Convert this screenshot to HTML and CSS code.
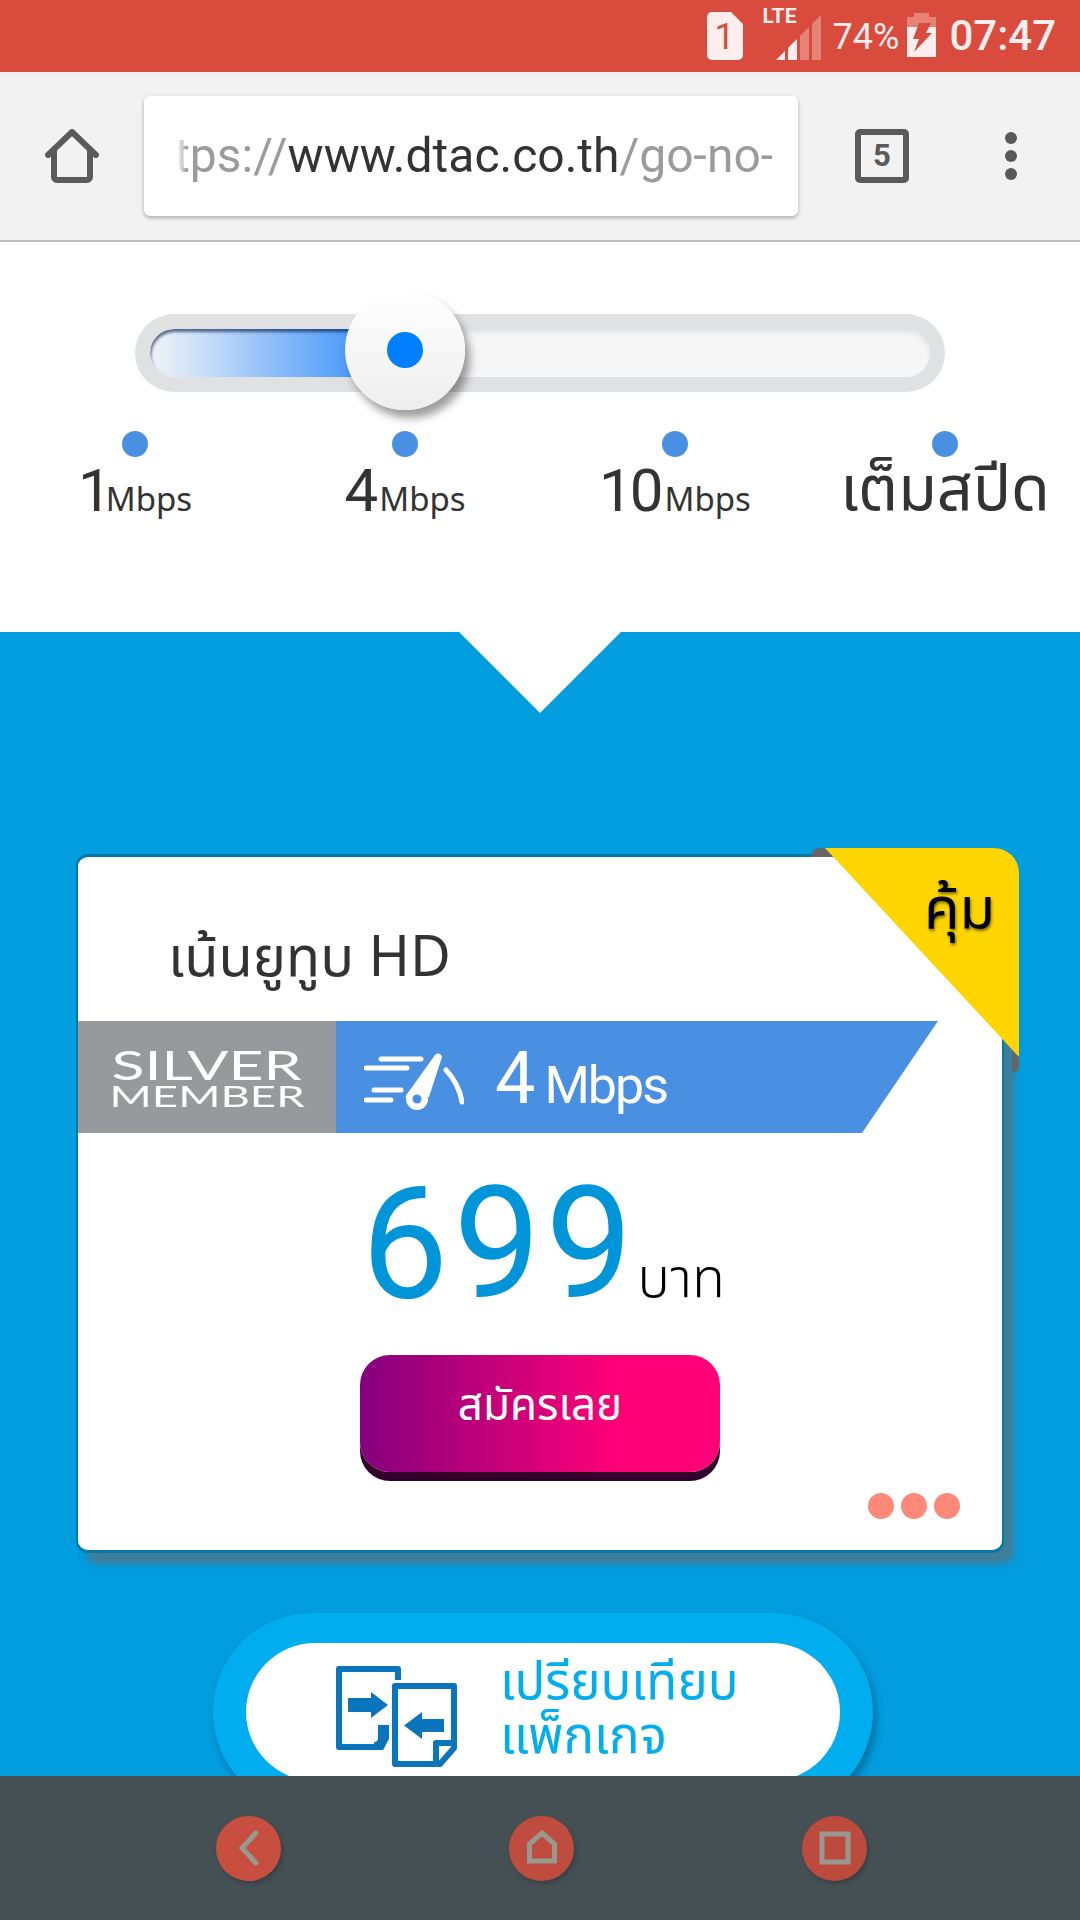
FILE: index.html
```html
<!DOCTYPE html>
<html lang="th">
<head>
<meta charset="utf-8">
<title>dtac go-no-limit</title>
<link rel="stylesheet" href="styles.css">
</head>
<body>
<div class="phone">
  <header class="status">
    <div class="sim"><svg viewBox="0 0 36 48" width="36" height="48"><path class="sb-fill" d="M5 0H24L36 12V43a5 5 0 0 1-5 5H5a5 5 0 0 1-5-5V5a5 5 0 0 1 5-5Z"/></svg><span class="sim-num">1</span></div>
    <div class="signal"><span class="lte">LTE</span><svg viewBox="0 0 45 45" width="45" height="45"><polygon class="sb-fill" points="0,45 9,36 9,45"/><polygon class="sb-fill" points="12,33 21,24 21,45 12,45"/><polygon class="sb-dim" points="24,21 33,12 33,45 24,45"/><polygon class="sb-dim" points="36,9 45,0 45,45 36,45"/></svg></div>
    <span class="pct">74%</span>
    <svg class="batt" viewBox="0 0 29 44" width="29" height="44"><path class="sb-dim" d="M7 0H22V4H29V14H0V4H7Z"/><rect class="sb-fill" y="14" width="29" height="30"/><polygon class="sb-cut" points="12,10 24,10 19,20 25,20 7,39 12,26 6,26"/></svg>
    <span class="time">07:47</span>
  </header>

  <nav class="toolbar">
    <svg class="tb-home" viewBox="0 0 54 54" width="54" height="54"><path d="M3 26 27 3 51 26M9 21V48a3 3 0 0 0 3 3H42a3 3 0 0 0 3-3V21"/></svg>
    <div class="omnibox"><div class="url"><span class="url-inner">https://<b>www.dtac.co.th</b>/go-no-limit</span></div></div>
    <div class="tabs">5</div>
    <div class="menu"><i></i><i></i><i></i></div>
  </nav>

  <main class="page">
    <section class="speed">
      <div class="track">
        <div class="track-inner"><div class="track-fill"></div></div>
        <div class="knob"><i></i></div>
      </div>
      <div class="stops">
        <div class="stop"><i class="stop-dot"></i><span class="stop-label"><span class="num">1</span><span class="unit tight">Mbps</span></span></div>
        <div class="stop"><i class="stop-dot"></i><span class="stop-label"><span class="num">4</span><span class="unit">Mbps</span></span></div>
        <div class="stop"><i class="stop-dot"></i><span class="stop-label"><span class="num">10</span><span class="unit">Mbps</span></span></div>
        <div class="stop"><i class="stop-dot"></i><span class="stop-label full">เต็มสปีด</span></div>
      </div>
    </section>

    <section class="plans">
      <div class="notch"></div>
      <article class="card">
        <h2 class="title">เน้นยูทูบ HD</h2>
        <div class="strip">
          <div class="member"><span class="m1">SILVER</span><span class="m2">MEMBER</span></div>
          <div class="rate">
            <svg class="gauge" viewBox="0 0 100 58" width="100" height="58"><g class="g-lines"><path d="M17 7H57M2 16H43M10 38H37M2 48H27"/><path d="M82 18Q95 32 98 50"/></g><path class="g-needle" d="M71 3a4 4 0 0 1 7 2L65 45H41Z"/><circle class="g-needle" cx="53" cy="47" r="11"/><circle class="g-hole" cx="53" cy="47" r="4.500"/></svg>
            <span class="rate-num">4</span><span class="rate-unit">Mbps</span>
          </div>
        </div>
        <div class="price"><span class="amount">699</span><span class="baht">บาท</span></div>
        <a class="cta">สมัครเลย</a>
        <div class="more"><i></i><i></i><i></i></div>
        <div class="ribbon">
          <svg viewBox="0 0 208 225" width="208" height="225"><path class="r-fold" d="M0 9Q1 0 10 0H14L22 9Z"/><path class="r-fold" d="M201 195 208 209V218a7 7 0 0 1-7 7Z"/><path class="r-face" d="M14 0H183a25 25 0 0 1 25 25V209Z"/></svg>
          <span class="r-text">คุ้ม</span>
        </div>
      </article>

      <div class="compare">
        <div class="compare-inner">
          <svg class="cmp-icon" viewBox="0 0 121 101" width="121" height="101">
            <path class="c-line" d="M62 14V3H3V81H47"/>
            <path class="c-solid" d="M12 32H35V26L52 39 35 52V46H12Z"/>
            <path class="c-solid" d="M42 59H53V73L47 84H38V76Q42 76 42 72Z"/>
            <path class="c-line" d="M59 20H118V82L104 98H59Z"/>
            <path class="c-line" d="M118 77H100V98"/>
            <path class="c-solid" d="M108 53H86V46L68 59.500 86 73V66H108Z"/>
          </svg>
          <p class="cmp-text">เปรียบเทียบ<br>แพ็กเกจ</p>
        </div>
      </div>
    </section>
  </main>

  <footer class="navbar">
    <div class="nav-btn"><svg viewBox="0 0 30 40" width="30" height="40"><path d="M22 5 8 20 22 35"/></svg></div>
    <div class="nav-btn dim1"><svg viewBox="0 0 40 40" width="40" height="40"><path d="M7.500 33V16L20 5 32.500 16V33Z"/></svg></div>
    <div class="nav-btn dim2"><svg viewBox="0 0 40 40" width="40" height="40"><path d="M7 6H33V34H7Z"/></svg></div>
  </footer>
</div>
</body>
</html>
```

FILE: styles.css
```css
* { box-sizing: border-box; }
html, body { margin: 0; padding: 0; }
body { width: 1080px; height: 1920px; overflow: hidden; background: #fff; font-family: "Noto Sans Thai", "Noto Sans", Roboto, sans-serif; }
.phone { width: 1080px; height: 1920px; display: flex; flex-direction: column; overflow: hidden; }

/* status bar */
.status { height: 72px; flex: none; background: #d94b3d; color: #fbeeec; display: flex; align-items: flex-start; padding-right: 24px; justify-content: flex-end; font-family: Roboto, sans-serif; }
.sb-fill { fill: #fbeeec; }
.sb-dim { fill: #fbeeec; opacity: .35; }
.sb-cut { fill: #d94b3d; }
.sim { position: relative; width: 36px; height: 48px; margin-top: 12px; }
.sim svg { display: block; }
.sim-num { position: absolute; inset: 0; text-align: center; font-size: 36px; line-height: 50px; font-weight: 400; color: #d94b3d; }
.signal { position: relative; width: 58px; height: 60px; margin-left: 20px; display: flex; justify-content: flex-end; align-items: flex-end; }
.signal svg { display: block; }
.lte { position: absolute; left: 0; top: 4px; font-size: 21px; line-height: 24px; font-weight: 700; }
.pct { font-size: 36px; line-height: 42px; margin: 16px 0 0 12px; }
.batt { margin: 13px 0 0 8px; }
.time { font-size: 42px; line-height: 50px; font-weight: 500; margin: 11px 0 0 13px; }

/* toolbar */
.toolbar { height: 170px; flex: none; background: #f2f2f2; border-bottom: 2px solid #bdbdbd; display: flex; align-items: center; padding: 0 0 0 45px; }
.tb-home { flex: none; }
.tb-home path { fill: none; stroke: #5a5a5a; stroke-width: 6px; stroke-linecap: round; stroke-linejoin: round; }
.omnibox { width: 654px; height: 120px; margin-left: 45px; background: #fff; border-radius: 6px; box-shadow: 0 2px 4px rgba(0,0,0,.3); padding: 0 26px 0 33px; display: flex; align-items: center; flex: none; }
.url { width: 100%; overflow: hidden; white-space: nowrap; font-family: Roboto, sans-serif; font-size: 48px; line-height: 64px; color: #9b9b9b; -webkit-mask-image: linear-gradient(90deg, transparent, #000 10px); mask-image: linear-gradient(90deg, transparent, #000 10px); }
.url-inner { display: inline-block; margin-left: -45px; }
.url b { font-weight: 400; color: #333; }
.tabs { width: 54px; height: 54px; margin-left: 57px; border: 6px solid #5a5a5a; border-radius: 5px; text-align: center; font: 700 31px/42px Roboto, sans-serif; color: #5a5a5a; flex: none; }
.menu { display: flex; flex-direction: column; gap: 6px; margin-left: 96px; flex: none; }
.menu i { display: block; width: 12px; height: 12px; border-radius: 50%; background: #5a5a5a; }

/* page */
.page { flex: 1; min-height: 0; overflow: hidden; background: #029ddf; }
.speed { height: 390px; background: #fff; padding-top: 72px; }
.track { position: relative; width: 810px; height: 78px; margin-left: 135px; background: #e0e1e3; border-radius: 39px; padding: 15px; }
.track-inner { height: 48px; background: #f6f6f6; border-radius: 24px; overflow: hidden; box-shadow: inset 0 4px 5px rgba(0,0,0,.07); position: relative; }
.track-fill { width: 255px; height: 48px; background: linear-gradient(90deg, #ecf0f6 3%, #cfe2f8 18%, #7fb5f8 55%, #1f86f8 100%); box-shadow: inset 1px 3px 3px rgba(0,20,70,.6); border-radius: 24px 0 0 24px; }
.knob { position: absolute; left: 210px; top: -24px; width: 120px; height: 120px; border-radius: 50%; background: linear-gradient(180deg, #fff, #eeeeee); box-shadow: 5px 8px 9px rgba(0,0,0,.38); display: flex; align-items: center; justify-content: center; }
.knob i { display: block; width: 36px; height: 36px; border-radius: 50%; background: #0080ff; }
.stops { display: grid; grid-template-columns: repeat(4, 1fr); margin-top: 39px; }
.stop { display: flex; flex-direction: column; align-items: center; position: relative; }
.stop-dot { display: block; width: 26px; height: 26px; border-radius: 50%; background: #4a90e2; position: relative; z-index: 1; }
.stop-label { display: block; white-space: nowrap; color: #333; height: 68px; line-height: 68px; }
.num { font-size: 60px; letter-spacing: -3px; font-family: Roboto, sans-serif; }
.unit { font-size: 33px; font-family: "Noto Sans", sans-serif; margin-left: 4px; }
.unit.tight { margin-left: -3px; }
.full { font-size: 63px; margin-top: 0; }

.plans { position: relative; height: 1144px; padding-top: 222px; }
.notch { position: absolute; left: 459px; top: 0; width: 162px; height: 81px; background: #fff; clip-path: polygon(0 0, 100% 0, 50% 100%); }

/* card */
.card { position: relative; width: 928px; height: 699px; margin-left: 76px; background: #fff; border: solid #0578a8; border-width: 3px 2px; border-radius: 12px; box-shadow: 10px 11px 6px rgba(105,105,105,.6); display: flex; flex-direction: column; }
.title { margin: 0; height: 164px; padding: 68px 0 0 90px; font-size: 56px; line-height: 68px; font-weight: 400; color: #333; }
.strip { height: 112px; display: flex; flex: none; }
.member { width: 258px; flex: none; background: #97999c; color: #fff; display: flex; flex-direction: column; align-items: center; padding-top: 27px; font-family: Lato, sans-serif; font-weight: 400; }
.m1 { font-size: 40px; line-height: 35px; transform: scaleX(1.52); }
.m2 { font-size: 29px; line-height: 24px; transform: scaleX(1.57); margin-top: 1px; }
.rate { width: 602px; background: #4a90e2; clip-path: polygon(0 0, 100% 0, 526px 100%, 0 100%); color: #fff; display: flex; align-items: baseline; padding-left: 28px; font-family: Roboto, sans-serif; }
.gauge { align-self: flex-start; margin-top: 31px; flex: none; }
.g-lines path { fill: none; stroke: #fff; stroke-width: 5px; stroke-linecap: round; }
.g-needle { fill: #fff; }
.g-hole { fill: #4a90e2; }
.rate-num { font-size: 72px; line-height: 116px; margin-left: 31px; }
.rate-unit { font-size: 52px; margin-left: 9px; letter-spacing: -2px; }
.price { height: 222px; display: flex; align-items: baseline; justify-content: center; padding-left: 6px; flex: none; }
.amount { font: 400 155px/222px Roboto, sans-serif; letter-spacing: 5px; color: #0095d8; }
.baht { font-size: 54px; font-weight: 300; color: #000; margin-left: 0; }
.cta { display: block; flex: none; width: 360px; height: 117px; margin: 0 auto; border-radius: 30px; background: linear-gradient(90deg, #85007d 0%, #ff0076 72%); box-shadow: 0 9px 0 #33002c; color: #fff; text-align: center; font-size: 44px; line-height: 104px; }
.more { display: flex; justify-content: flex-end; gap: 7px; margin-top: 21px; padding-right: 42px; }
.more i { display: block; width: 26px; height: 26px; border-radius: 50%; background: #ff8978; }

.ribbon { position: absolute; right: -17px; top: -9px; width: 208px; height: 225px; }
.ribbon svg { display: block; }
.r-fold { fill: #666; }
.r-face { fill: #ffd500; }
.r-text { position: absolute; left: 113px; top: 28px; font-size: 58px; line-height: 68px; color: #000; text-shadow: 1px 2px 3px rgba(0,0,0,.5); }

/* compare */
.compare { width: 660px; height: 198px; margin: 60px 0 0 213px; background: #00aeef; border-radius: 99px; box-shadow: 3px 6px 8px rgba(0,0,0,.3); padding: 30px 33px; }
.compare-inner { height: 138px; background: #fff; border-radius: 69px; display: flex; padding: 23px 0 0 90px; }
.cmp-icon { flex: none; }
.cmp-text { margin: -9px 0 0 43px; font-size: 51px; line-height: 54px; color: #00aeef; }
.c-line { fill: none; stroke: #0a75bc; stroke-width: 6px; stroke-linejoin: round; }
.c-solid { fill: #0a75bc; }

/* android nav */
.navbar { height: 144px; flex: none; background: #455055; display: flex; align-items: center; justify-content: center; gap: 228px; padding-left: 3px; }
.nav-btn { width: 65px; height: 65px; border-radius: 50%; background: #c84f40; box-shadow: 2px 3px 4px rgba(0,0,0,.2); display: flex; align-items: center; justify-content: center; }
.nav-btn.dim1 { background: #c04c3f; }
.nav-btn.dim2 { background: #bc4b3e; }
.nav-btn path { fill: none; stroke: #98988e; stroke-width: 5px; stroke-linecap: round; }
```
